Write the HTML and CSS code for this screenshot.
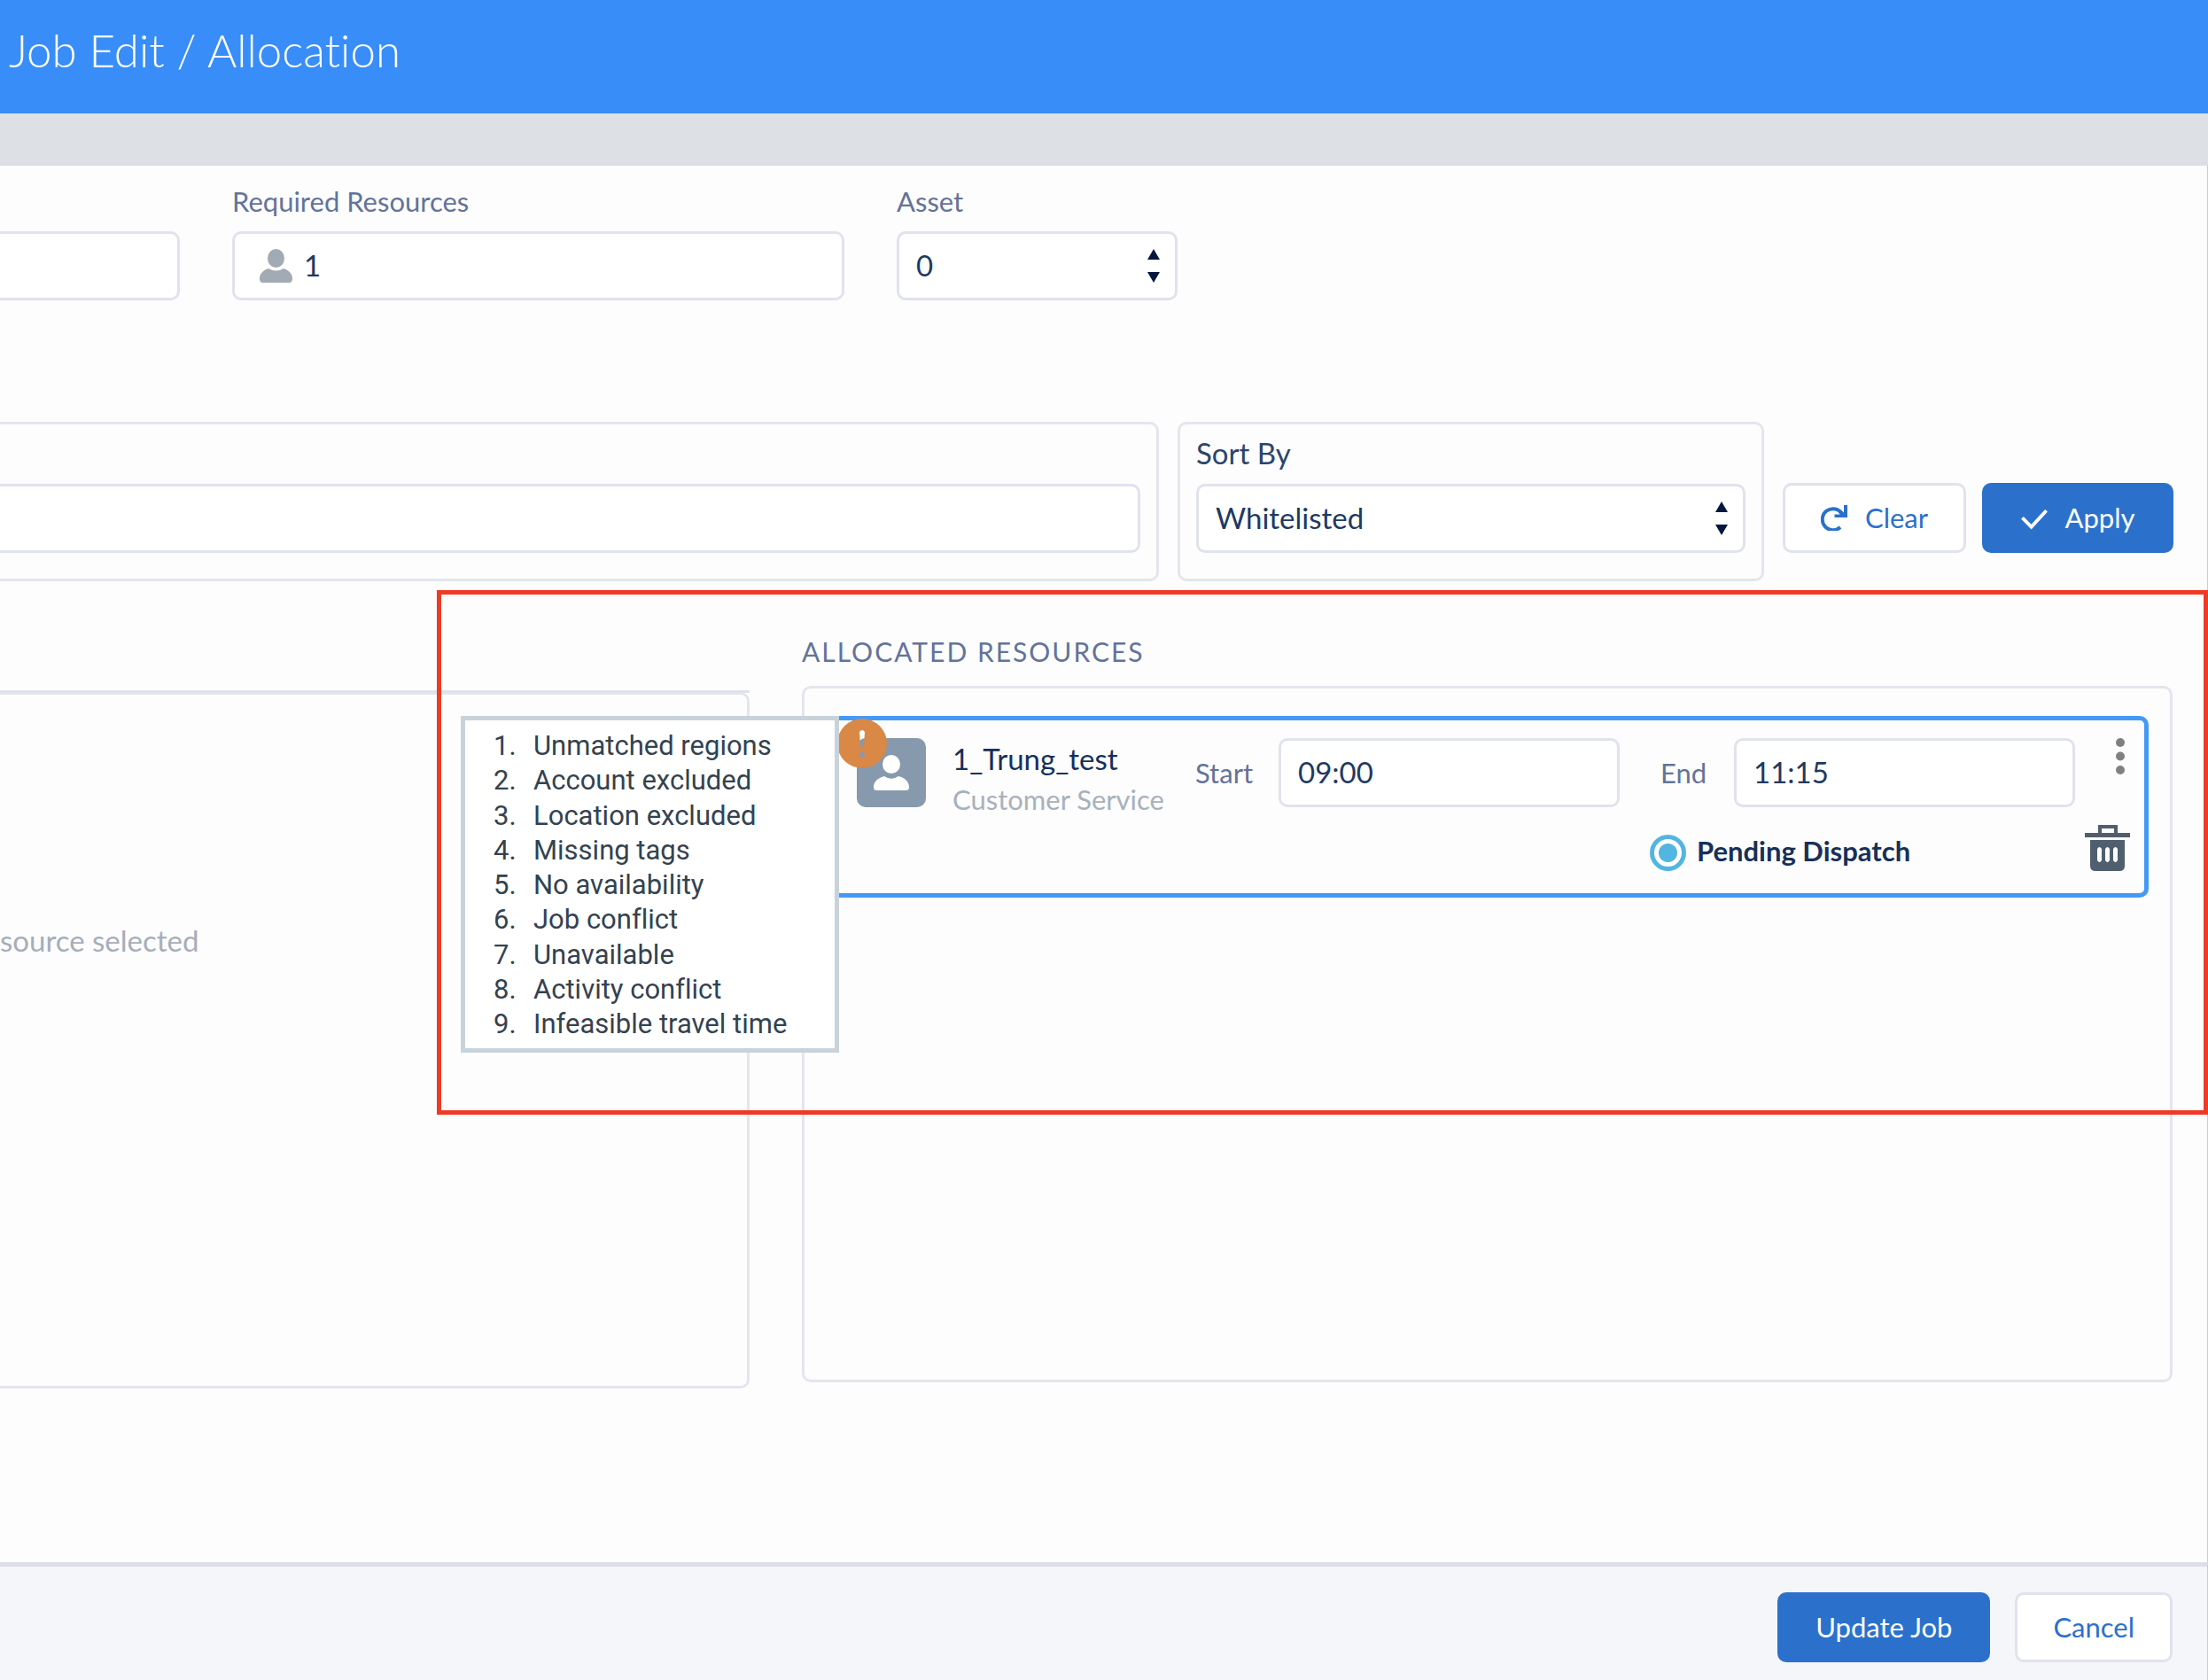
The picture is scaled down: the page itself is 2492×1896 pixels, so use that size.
FILE: index.html
```html
<!DOCTYPE html>
<html lang="en">
<head>
<meta charset="utf-8">
<title>Job Edit / Allocation</title>
<link rel="stylesheet" href="styles.css">
</head>
<body>
<div class="page">
  <header class="header"><h1 class="title">Job Edit / Allocation</h1></header>
  <div class="strip"></div>

  <main class="main">
    <section class="fields">
      <input class="control control-cut" type="text" aria-label="Details">
      <div class="field">
        <label class="label" for="required">Required Resources</label>
        <div class="wrap">
          <input class="control control-icon" id="required" type="text" value="1">
          <svg class="lead" viewBox="0 0 37 38" aria-hidden="true"><ellipse cx="18.500" cy="10.500" rx="9.500" ry="10.500"/><path d="M10 22 Q18.500 27 27 22 C33 24 37 28 37 33 C37 36.500 36 38 33 38 H4 C1 38 0 36.500 0 33 C0 28 4 24 10 22 Z"/></svg>
        </div>
      </div>
      <div class="field">
        <label class="label" for="asset">Asset</label>
        <div class="wrap">
          <select class="control" id="asset"><option>0</option></select>
          <svg class="arrows" viewBox="0 0 14 38" aria-hidden="true"><path d="M7 0 L14 12 H0 Z M0 26 H14 L7 38 Z"/></svg>
        </div>
      </div>
    </section>

    <section class="filters">
      <div class="box box-cut">
        <input class="control control-cut" type="text" aria-label="Filter">
      </div>
      <div class="box">
        <label class="label label-dark" for="sort">Sort By</label>
        <div class="wrap">
          <select class="control" id="sort"><option>Whitelisted</option></select>
          <svg class="arrows" viewBox="0 0 14 38" aria-hidden="true"><path d="M7 0 L14 12 H0 Z M0 26 H14 L7 38 Z"/></svg>
        </div>
      </div>
      <div class="filter-buttons">
        <button class="button clear" type="button">
          <svg class="icon" viewBox="0 0 30 30" aria-hidden="true"><path d="M22 26 A12 12 0 1 1 24 11" fill="none" stroke="currentColor" stroke-width="4"/><path d="M26 1 H30 V15 H15.500 V11.500 H22 L20 9.500 L23 7 L26 9.500 Z" fill="currentColor"/></svg>
          Clear
        </button>
        <button class="button primary apply" type="button">
          <svg class="icon" viewBox="0 0 31 30" aria-hidden="true"><path d="M1.500 15.500 L12 26 L29.500 7" fill="none" stroke="currentColor" stroke-width="4"/></svg>
          Apply
        </button>
      </div>
    </section>

    <section class="columns">
      <div class="column-left">
        <div class="panel panel-cut"><p class="empty">source selected</p></div>
      </div>
      <div class="column-right">
        <h2 class="heading">Allocated Resources</h2>
        <div class="panel">
          <article class="card">
            <div class="avatar">
              <svg class="avatar-person" viewBox="0 0 40 40" aria-hidden="true"><ellipse cx="20" cy="10.500" rx="10" ry="10.500"/><path d="M12 24 Q20 29.500 28 24 C36 26 40 31 40 36 C40 39 39 40 36 40 H4 C1 40 0 39 0 36 C0 31 4 26 12 24 Z"/></svg>
              <svg class="badge" viewBox="0 0 56 56" role="img" aria-label="Warning"><path d="M25 15 L26 22 H30 L31 15 Q28 11 25 15 Z" fill="#fff"/><path fill-rule="evenodd" d="M28 0 A28 28 0 1 1 28 56 A28 28 0 1 1 28 0 Z M25 15 L26 31 Q28 34 30 31 L31 15 Q28 11 25 15 Z M28 37.500 A3 3 0 1 0 28 43.500 A3 3 0 1 0 28 37.500 Z"/></svg>
            </div>
            <div class="person">
              <div class="name">1_Trung_test</div>
              <div class="role">Customer Service</div>
            </div>
            <div class="schedule">
              <div class="times">
                <label class="label" for="start">Start</label>
                <input class="control" id="start" type="text" value="09:00">
                <label class="label label-end" for="end">End</label>
                <input class="control" id="end" type="text" value="11:15">
              </div>
              <label class="status"><input class="radio" type="radio" checked><span class="status-text">Pending Dispatch</span></label>
            </div>
            <div class="actions">
              <button class="icon-button" type="button" aria-label="More"><svg width="22" height="42" viewBox="0 0 22 42" fill="#808080"><circle cx="11" cy="5" r="5"/><circle cx="11" cy="20.500" r="5"/><circle cx="11" cy="36" r="5"/></svg></button>
              <button class="icon-button" type="button" aria-label="Delete"><svg width="51" height="52" viewBox="0 0 51 52" fill="#505f70"><path fill-rule="evenodd" d="M15 9 V0 H37 V9 H51 V14 H0 V9 Z M19 4 V9 H33 V4 Z"/><path fill-rule="evenodd" d="M6 17 H45 V46 Q45 52 39 52 H12 Q6 52 6 46 Z M14 27 V40 Q16.500 44 19 40 V27 Q16.500 23 14 27 Z M23 27 V40 Q25.500 44 28 40 V27 Q25.500 23 23 27 Z M32 27 V40 Q34.500 44 37 40 V27 Q34.500 23 32 27 Z"/></svg></button>
            </div>
            <ol class="tooltip">
              <li>Unmatched regions</li>
              <li>Account excluded</li>
              <li>Location excluded</li>
              <li>Missing tags</li>
              <li>No availability</li>
              <li>Job conflict</li>
              <li>Unavailable</li>
              <li>Activity conflict</li>
              <li>Infeasible travel time</li>
            </ol>
          </article>
        </div>
      </div>
      <div class="highlight"></div>
    </section>
  </main>

  <footer class="footer">
    <button class="button primary" type="button">Update Job</button>
    <button class="button" type="button">Cancel</button>
  </footer>
</div>
</body>
</html>
```
FILE: styles.css
```css
* { box-sizing: border-box; }

body {
  margin: 0;
  font: 31px/36px Lato, "Open Sans", sans-serif;
  font-variant-ligatures: none;
  color: #1b355e;
  background: #fdfdfd;
}

.page {
  display: flex;
  flex-direction: column;
  min-height: 100vh;
  overflow: hidden;
}

.header {
  padding: 25px 10px 39px;
  background: #388df9;
}
.title {
  margin: 0;
  font-size: 51px;
  line-height: 64px;
  font-weight: 300;
  color: #fff;
}
.strip {
  height: 59px;
  background: #dde0e5;
  border-bottom: 4px solid #dadee8;
}

.main {
  flex: 1;
  padding-top: 22px;
  border-right: 1px solid #c9cdd2;
}

/* Form controls */
.label {
  display: block;
  line-height: 36px;
  color: #63739a;
}
.label-dark {
  font-size: 33px;
  color: #2b446d;
}
.control {
  display: block;
  width: 100%;
  height: 78px;
  margin: 0;
  padding: 0 19px 3px;
  appearance: none;
  border: 3px solid #e0e3ec;
  border-radius: 10px;
  background: #fff;
  font: 33px/40px Lato, "Open Sans", sans-serif;
  color: #1f3963;
}
.control-cut {
  border-left: 0;
  border-radius: 0 10px 10px 0;
}
.control-icon { padding-left: 78px; }
.wrap { position: relative; }
.lead {
  position: absolute;
  left: 31px;
  top: 20px;
  width: 37px;
  height: 38px;
  fill: #a2aab4;
}
.arrows {
  position: absolute;
  right: 20px;
  top: 20px;
  width: 14px;
  height: 38px;
  fill: #05173f;
  pointer-events: none;
}

.fields {
  display: grid;
  grid-template-columns: 203px 691px 317px;
  gap: 59px;
  align-items: end;
}
.field {
  display: grid;
  gap: 16px;
}

/* Filter bar */
.filters {
  display: flex;
  gap: 21px;
  margin-top: 137px;
  padding-right: 38px;
}
.box {
  display: grid;
  gap: 17px;
  width: 662px;
  padding: 14px 18px 29px;
  border: 3px solid #e3e6ec;
  border-radius: 10px;
}
.box-cut {
  flex: 1;
  align-items: end;
  padding-left: 0;
  border-left: 0;
  border-radius: 0 10px 10px 0;
}
.filter-buttons {
  display: flex;
  align-self: flex-end;
  gap: 18px;
  margin-bottom: 32px;
}

.button {
  display: flex;
  align-items: center;
  justify-content: center;
  gap: 20px;
  height: 79px;
  margin: 0;
  padding: 0 40px 2px;
  border: 3px solid #e0e3ec;
  border-radius: 10px;
  background: #fff;
  font: 31px/36px Lato, "Open Sans", sans-serif;
  color: #2b71cc;
}
.primary {
  border-color: #2b71cc;
  background: #2b71cc;
  color: #fff;
}
.clear { width: 207px; }
.apply { width: 216px; }
.icon {
  flex: none;
  width: 30px;
  height: 30px;
}

/* Resource columns */
.columns {
  position: relative;
  display: grid;
  grid-template-columns: 846px 1fr;
  gap: 59px;
  margin-top: 61px;
  padding-right: 39px;
}
.column-left { padding-top: 64px; }
.panel {
  min-height: 786px;
  padding: 31px 24px;
  border: 3px solid #e3e6ec;
  border-radius: 10px;
}
.panel-cut {
  position: relative;
  padding: 259px 0 0;
  border-left: 0;
  border-radius: 0 10px 10px 0;
}
.panel-cut::before {
  content: "";
  position: absolute;
  left: 0;
  right: -3px;
  top: -5px;
  height: 3px;
  background: #dfe2ea;
}
.empty {
  margin: 0;
  font-size: 33px;
  color: #a5aeba;
}
.heading {
  margin: 0 0 21px;
  font-size: 30px;
  line-height: 36px;
  font-weight: 400;
  letter-spacing: 2px;
  text-transform: uppercase;
  color: #63739a;
}
.highlight {
  position: absolute;
  left: 493px;
  right: -1px;
  top: -51px;
  height: 592px;
  border: 5px solid #ee3a26;
  pointer-events: none;
}

/* Allocated resource card */
.card {
  position: relative;
  display: flex;
  min-height: 205px;
  padding: 20px 16px 20px 30px;
  border: 5px solid #4499f7;
  border-radius: 10px;
}
.avatar {
  position: relative;
  flex: none;
  width: 78px;
  height: 78px;
  padding: 19px;
  border-radius: 10px;
  background: #8799ad;
}
.avatar-person {
  display: block;
  width: 40px;
  height: 40px;
  fill: #fff;
}
.badge {
  position: absolute;
  left: -22px;
  top: -22px;
  width: 56px;
  height: 56px;
  fill: #d98845;
}
.person {
  flex: 1;
  min-width: 236px;
  padding-left: 30px;
}
.name {
  font-size: 33px;
  line-height: 46px;
  color: #16305a;
}
.role {
  line-height: 46px;
  color: #a8b1bb;
}
.schedule {
  display: grid;
  flex: none;
  width: 993px;
  gap: 31px;
  align-content: start;
}
.times {
  display: grid;
  grid-template-columns: 94px 385px 129px 385px;
  align-items: center;
}
.label-end { padding-left: 46px; }
.status {
  display: flex;
  align-items: center;
  gap: 12px;
  padding-left: 513px;
  font-weight: 700;
  color: #16305a;
}
.status-text { padding-bottom: 5px; }
.radio {
  appearance: none;
  width: 41px;
  height: 41px;
  margin: 0;
  border: 5px solid #53b5e1;
  border-radius: 50%;
  background: radial-gradient(circle, #53b5e1 10px, #fff 11px);
}
.actions {
  display: flex;
  flex-direction: column;
  align-items: flex-end;
  gap: 56px;
  width: 62px;
}
.icon-button {
  display: block;
  margin: 0;
  padding: 0;
  border: 0;
  background: none;
}
.icon-button svg { display: block; }

.tooltip {
  position: absolute;
  right: calc(100% - 10px);
  top: -5px;
  display: flex;
  flex-direction: column;
  justify-content: space-between;
  width: 427px;
  height: 380px;
  margin: 0;
  padding: 9px 0 8px 32px;
  border: 5px solid #c8d2da;
  background: #fff;
  list-style: none;
  counter-reset: reason;
  font-family: Roboto, sans-serif;
  line-height: 39px;
  color: #34424f;
}
.tooltip li {
  display: flex;
  counter-increment: reason;
}
.tooltip li::before {
  content: counter(reason) ".";
  width: 45px;
}

.footer {
  display: flex;
  justify-content: flex-end;
  gap: 28px;
  padding: 29px 39px 20px;
  border-top: 5px solid #dbe0e8;
  border-right: 1px solid #c9cdd2;
  background: #f4f6fa;
}
```
